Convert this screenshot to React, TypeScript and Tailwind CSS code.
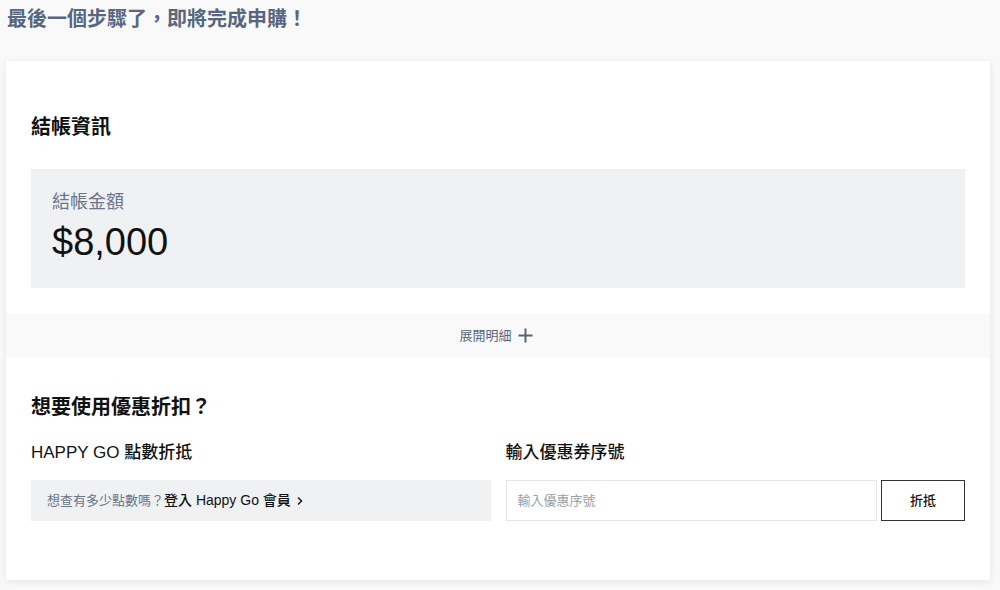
import React from "react";

export default function App() {
  return (
    <div
      className="min-h-[590px] w-[1000px] bg-[#f9f9fa] pl-[6px] pr-[10px] pt-[5px] pb-[10px]"
      style={{ fontFamily: '"Liberation Sans", "Noto Sans CJK TC", sans-serif' }}
    >
      <h1 className="pl-[1px] text-[20px] leading-[28px] font-bold text-[#58667f]">
        最後一個步驟了，即將完成申購！
      </h1>
      <div className="mt-[28px] bg-white shadow-[0_2px_8px_rgba(0,0,0,0.08)]">
        <div className="px-[25px] pt-[52px]">
          <h2 className="text-[20px] leading-[28px] font-bold text-[#111]">結帳資訊</h2>
          <div className="mt-[28px] h-[119px] bg-[#f0f1f3] pl-[21px] pt-[20px]">
            <div className="text-[18px] leading-[26px] text-[#6b7588]">結帳金額</div>
            <div className="mt-[6px] text-[38px] leading-[42px] text-[#111]">$8,000</div>
          </div>
        </div>
        <div className="mt-[26px] flex h-[43px] items-center justify-center gap-[6px] bg-[#f9f9fa] pr-[4px] text-[13px] text-[#58637a]">
          <span>展開明細</span>
          <svg width="15" height="15" viewBox="0 0 15 15" className="text-[#58637a]">
            <path d="M7.5 0.5v14M0.5 7.5h14" stroke="currentColor" strokeWidth="2" fill="none" />
          </svg>
        </div>
        <div className="px-[25px] pt-[36px] pb-[59px]">
          <h2 className="text-[20px] leading-[28px] font-bold text-[#111]">想要使用優惠折扣？</h2>
          <div className="mt-[20px] grid grid-cols-2 gap-[15px]">
            <div>
              <div className="text-[17px] leading-[24px] font-medium text-[#111]">HAPPY GO 點數折抵</div>
              <div className="mt-[15px] flex h-[41px] items-center bg-[#f0f1f3] pl-[16px] text-[13px]">
                <span className="text-[#6b7588]">想查有多少點數嗎？</span>
                <span className="text-[14px] font-medium text-[#111]">登入 Happy Go 會員</span>
                <svg width="8" height="10" viewBox="0 0 8 10" className="ml-[5px] text-[#111]">
                  <path d="M2 1.5l3.5 3.5L2 8.5" stroke="currentColor" strokeWidth="1.4" fill="none" />
                </svg>
              </div>
            </div>
            <div>
              <div className="text-[17px] leading-[24px] font-medium text-[#111]">輸入優惠券序號</div>
              <div className="mt-[15px] flex h-[41px] gap-[4px]">
                <input
                  placeholder="輸入優惠序號"
                  className="h-full min-w-0 flex-1 border border-[#e6e7ea] px-[11px] text-[13px] text-[#111] outline-none placeholder:text-[#9a9fa8]"
                />
                <button className="h-full w-[84px] border-[1.5px] border-[#333] bg-white text-[13px] font-medium text-[#111]">
                  折抵
                </button>
              </div>
            </div>
          </div>
        </div>
      </div>
    </div>
  );
}
